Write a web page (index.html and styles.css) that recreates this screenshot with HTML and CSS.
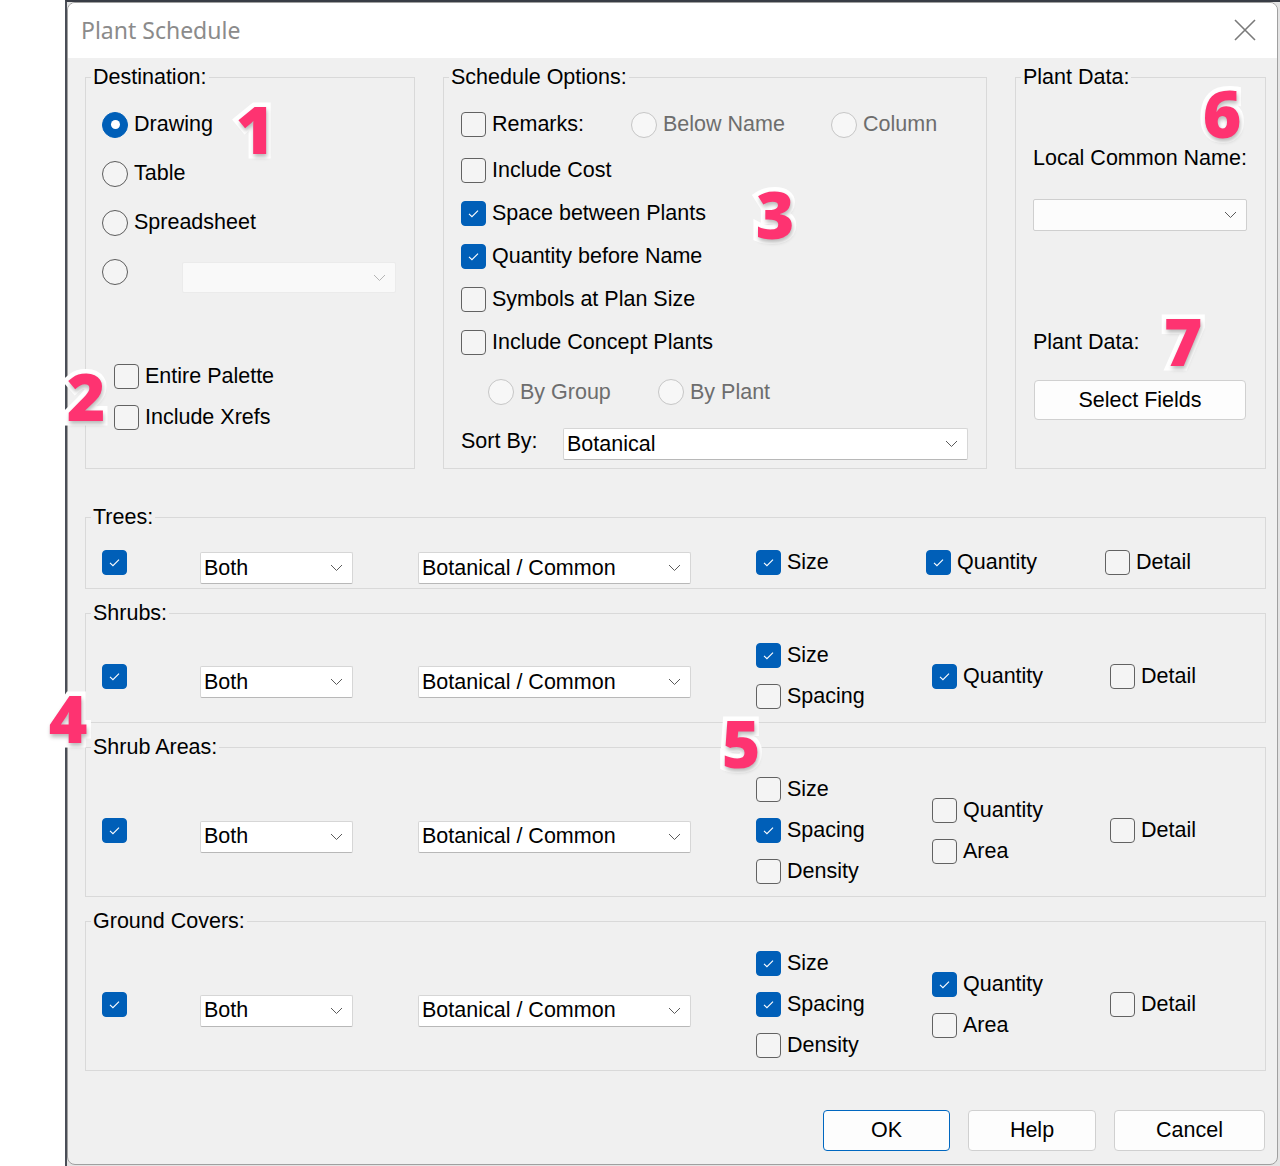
FILE: index.html
```html
<!DOCTYPE html>
<html lang="en">
<head>
<meta charset="utf-8">
<title>Plant Schedule</title>
<link rel="stylesheet" href="styles.css">
</head>
<body>
<div class="screen">
  <div class="backdrop">
    <div class="dialog">
      <div class="titlebar">
        <span class="title">Plant Schedule</span>
        <svg class="close" width="22" height="22" viewBox="0 0 22 22"><path d="M1 1 L21 21 M21 1 L1 21" stroke="#7a7a7a" stroke-width="1.6" fill="none"/></svg>
      </div>
      <div class="body">
        <div class="top-row">
          <fieldset class="group dest">
            <legend>Destination:</legend>
            <div class="dest-inner">
              <div class="radio-list">
                <label class="opt r49"><span class="radio on"></span>Drawing</label>
                <label class="opt r49"><span class="radio"></span>Table</label>
                <label class="opt r49"><span class="radio"></span>Spreadsheet</label>
                <div class="opt r49"><span class="radio"></span>
                  <div class="combo disabled w214"><span></span><svg class="chev" width="13" height="8" viewBox="0 0 13 8"><path d="M1 1 L6.5 6.5 L12 1" fill="none" stroke="#b5b5b5" stroke-width="1"/></svg></div>
                </div>
              </div>
              <div class="dest-checks">
                <label class="opt r41"><span class="chk"></span>Entire Palette</label>
                <label class="opt r41"><span class="chk"></span>Include Xrefs</label>
              </div>
            </div>
          </fieldset>

          <fieldset class="group sched">
            <legend>Schedule Options:</legend>
            <div class="sched-inner">
              <div class="srow first">
                <label class="opt w170"><span class="chk"></span>Remarks:</label>
                <label class="opt w200 dis"><span class="radio dis"></span>Below Name</label>
                <label class="opt dis"><span class="radio dis"></span>Column</label>
              </div>
              <div class="srow"><label class="opt"><span class="chk"></span>Include Cost</label></div>
              <div class="srow"><label class="opt"><span class="chk on"><svg viewBox="0 0 25 25"><path d="M7.6 12.9 L10.8 16 L17.4 9.4" fill="none" stroke="#fff" stroke-width="1.2"/></svg></span>Space between Plants</label></div>
              <div class="srow"><label class="opt"><span class="chk on"><svg viewBox="0 0 25 25"><path d="M7.6 12.9 L10.8 16 L17.4 9.4" fill="none" stroke="#fff" stroke-width="1.2"/></svg></span>Quantity before Name</label></div>
              <div class="srow"><label class="opt"><span class="chk"></span>Symbols at Plan Size</label></div>
              <div class="srow"><label class="opt"><span class="chk"></span>Include Concept Plants</label></div>
              <div class="srow by">
                <label class="opt w170 dis"><span class="radio dis"></span>By Group</label>
                <label class="opt dis"><span class="radio dis"></span>By Plant</label>
              </div>
              <div class="sort-row">
                <span class="sort-label">Sort By:</span>
                <div class="combo w405"><span>Botanical</span><svg class="chev" width="13" height="8" viewBox="0 0 13 8"><path d="M1 1 L6.5 6.5 L12 1" fill="none" stroke="#5a5a5a" stroke-width="1"/></svg></div>
              </div>
            </div>
          </fieldset>

          <fieldset class="group pdata">
            <legend>Plant Data:</legend>
            <div class="pdata-inner">
              <div class="pd-label first">Local Common Name:</div>
              <div class="combo soft w214"><span></span><svg class="chev" width="13" height="8" viewBox="0 0 13 8"><path d="M1 1 L6.5 6.5 L12 1" fill="none" stroke="#5a5a5a" stroke-width="1"/></svg></div>
              <div class="pd-label second">Plant Data:</div>
              <button class="btn select">Select Fields</button>
            </div>
          </fieldset>
        </div>

        <fieldset class="group sect trees">
          <legend>Trees:</legend>
          <div class="sect-grid">
            <span class="chk on"><svg viewBox="0 0 25 25"><path d="M7.6 12.9 L10.8 16 L17.4 9.4" fill="none" stroke="#fff" stroke-width="1.2"/></svg></span>
            <div class="combo w153"><span>Both</span><svg class="chev" width="13" height="8" viewBox="0 0 13 8"><path d="M1 1 L6.5 6.5 L12 1" fill="none" stroke="#5a5a5a" stroke-width="1"/></svg></div>
            <div class="combo w273"><span>Botanical / Common</span><svg class="chev" width="13" height="8" viewBox="0 0 13 8"><path d="M1 1 L6.5 6.5 L12 1" fill="none" stroke="#5a5a5a" stroke-width="1"/></svg></div>
            <div class="stack"><label class="opt r41"><span class="chk on"><svg viewBox="0 0 25 25"><path d="M7.6 12.9 L10.8 16 L17.4 9.4" fill="none" stroke="#fff" stroke-width="1.2"/></svg></span>Size</label></div>
            <div class="stack"><label class="opt r41"><span class="chk on"><svg viewBox="0 0 25 25"><path d="M7.6 12.9 L10.8 16 L17.4 9.4" fill="none" stroke="#fff" stroke-width="1.2"/></svg></span>Quantity</label></div>
            <div class="stack"><label class="opt r41"><span class="chk"></span>Detail</label></div>
          </div>
        </fieldset>

        <fieldset class="group sect shrubs">
          <legend>Shrubs:</legend>
          <div class="sect-grid">
            <span class="chk on"><svg viewBox="0 0 25 25"><path d="M7.6 12.9 L10.8 16 L17.4 9.4" fill="none" stroke="#fff" stroke-width="1.2"/></svg></span>
            <div class="combo w153"><span>Both</span><svg class="chev" width="13" height="8" viewBox="0 0 13 8"><path d="M1 1 L6.5 6.5 L12 1" fill="none" stroke="#5a5a5a" stroke-width="1"/></svg></div>
            <div class="combo w273"><span>Botanical / Common</span><svg class="chev" width="13" height="8" viewBox="0 0 13 8"><path d="M1 1 L6.5 6.5 L12 1" fill="none" stroke="#5a5a5a" stroke-width="1"/></svg></div>
            <div class="stack">
              <label class="opt r41"><span class="chk on"><svg viewBox="0 0 25 25"><path d="M7.6 12.9 L10.8 16 L17.4 9.4" fill="none" stroke="#fff" stroke-width="1.2"/></svg></span>Size</label>
              <label class="opt r41"><span class="chk"></span>Spacing</label>
            </div>
            <div class="stack"><label class="opt r41"><span class="chk on"><svg viewBox="0 0 25 25"><path d="M7.6 12.9 L10.8 16 L17.4 9.4" fill="none" stroke="#fff" stroke-width="1.2"/></svg></span>Quantity</label></div>
            <div class="stack"><label class="opt r41"><span class="chk"></span>Detail</label></div>
          </div>
        </fieldset>

        <fieldset class="group sect">
          <legend>Shrub Areas:</legend>
          <div class="sect-grid">
            <span class="chk on"><svg viewBox="0 0 25 25"><path d="M7.6 12.9 L10.8 16 L17.4 9.4" fill="none" stroke="#fff" stroke-width="1.2"/></svg></span>
            <div class="combo w153"><span>Both</span><svg class="chev" width="13" height="8" viewBox="0 0 13 8"><path d="M1 1 L6.5 6.5 L12 1" fill="none" stroke="#5a5a5a" stroke-width="1"/></svg></div>
            <div class="combo w273"><span>Botanical / Common</span><svg class="chev" width="13" height="8" viewBox="0 0 13 8"><path d="M1 1 L6.5 6.5 L12 1" fill="none" stroke="#5a5a5a" stroke-width="1"/></svg></div>
            <div class="stack">
              <label class="opt r41"><span class="chk"></span>Size</label>
              <label class="opt r41"><span class="chk on"><svg viewBox="0 0 25 25"><path d="M7.6 12.9 L10.8 16 L17.4 9.4" fill="none" stroke="#fff" stroke-width="1.2"/></svg></span>Spacing</label>
              <label class="opt r41"><span class="chk"></span>Density</label>
            </div>
            <div class="stack">
              <label class="opt r41"><span class="chk"></span>Quantity</label>
              <label class="opt r41"><span class="chk"></span>Area</label>
            </div>
            <div class="stack"><label class="opt r41"><span class="chk"></span>Detail</label></div>
          </div>
        </fieldset>

        <fieldset class="group sect">
          <legend>Ground Covers:</legend>
          <div class="sect-grid">
            <span class="chk on"><svg viewBox="0 0 25 25"><path d="M7.6 12.9 L10.8 16 L17.4 9.4" fill="none" stroke="#fff" stroke-width="1.2"/></svg></span>
            <div class="combo w153"><span>Both</span><svg class="chev" width="13" height="8" viewBox="0 0 13 8"><path d="M1 1 L6.5 6.5 L12 1" fill="none" stroke="#5a5a5a" stroke-width="1"/></svg></div>
            <div class="combo w273"><span>Botanical / Common</span><svg class="chev" width="13" height="8" viewBox="0 0 13 8"><path d="M1 1 L6.5 6.5 L12 1" fill="none" stroke="#5a5a5a" stroke-width="1"/></svg></div>
            <div class="stack">
              <label class="opt r41"><span class="chk on"><svg viewBox="0 0 25 25"><path d="M7.6 12.9 L10.8 16 L17.4 9.4" fill="none" stroke="#fff" stroke-width="1.2"/></svg></span>Size</label>
              <label class="opt r41"><span class="chk on"><svg viewBox="0 0 25 25"><path d="M7.6 12.9 L10.8 16 L17.4 9.4" fill="none" stroke="#fff" stroke-width="1.2"/></svg></span>Spacing</label>
              <label class="opt r41"><span class="chk"></span>Density</label>
            </div>
            <div class="stack">
              <label class="opt r41"><span class="chk on"><svg viewBox="0 0 25 25"><path d="M7.6 12.9 L10.8 16 L17.4 9.4" fill="none" stroke="#fff" stroke-width="1.2"/></svg></span>Quantity</label>
              <label class="opt r41"><span class="chk"></span>Area</label>
            </div>
            <div class="stack"><label class="opt r41"><span class="chk"></span>Detail</label></div>
          </div>
        </fieldset>

        <div class="buttons">
          <button class="btn ok">OK</button>
          <button class="btn help">Help</button>
          <button class="btn cancel">Cancel</button>
        </div>
      </div>
    </div>
  </div>

  <span class="badge b1">1</span>
  <span class="badge b2">2</span>
  <span class="badge b3">3</span>
  <span class="badge b4">4</span>
  <span class="badge b5">5</span>
  <span class="badge b6">6</span>
  <span class="badge b7">7</span>
</div>
</body>
</html>
```

FILE: styles.css
```css
* { box-sizing: border-box; }

html, body {
  margin: 0;
  padding: 0;
  background: #ffffff;
}

body {
  font-family: "Liberation Sans", Arial, sans-serif;
  font-size: 21.5px;
  color: #000;
}

.screen {
  position: relative;
  width: 1280px;
  height: 1166px;
  padding-left: 65px;
  display: flex;
  overflow: hidden;
}

.backdrop {
  flex: 1;
  background: #e4e4e4;
  border-top: 2px solid #383c45;
  border-left: 2px solid #4a4e57;
}

.dialog {
  width: 1211px;
  height: 1163px;
  background: #f0f0f0;
  border: 1px solid #a0a0a0;
  border-radius: 8px;
  overflow: hidden;
  display: flex;
  flex-direction: column;
}

.titlebar {
  height: 55px;
  background: #ffffff;
  display: flex;
  align-items: center;
  justify-content: space-between;
  padding: 0 21px 0 13px;
  flex: none;
}

.title {
  font-family: "Noto Sans", "Open Sans", sans-serif;
  font-size: 23px;
  color: #8b8b8b;
  margin-top: -1px;
}

.close { display: block; margin-top: -2px; }

.body {
  padding: 7px 0 0 17px;
}

/* group boxes */
.group {
  margin: 0;
  padding: 0;
  min-width: 0;
  border: 1px solid #d9d9d9;
}

.group legend {
  margin-left: 5px;
  padding: 0 2px;
  line-height: 24px;
  font-size: 21.5px;
}

.top-row {
  display: flex;
  gap: 28px;
  height: 404px;
}

.dest { width: 330px; }
.sched { width: 544px; }
.pdata { width: 251px; }

.dest-inner { padding: 11px 0 0 16px; }
.sched-inner { padding: 0 0 0 17px; }
.pdata-inner { padding: 0 0 0 17px; }

/* generic option rows */
.opt {
  display: flex;
  align-items: center;
  gap: 6px;
  white-space: nowrap;
}

.r49 { height: 49px; }
.r41 { height: 41px; }
.w170 { width: 170px; flex: none; }
.w200 { width: 200px; flex: none; }

.dis { color: #6d6d6d; }

.radio {
  width: 26px;
  height: 26px;
  border-radius: 50%;
  border: 1px solid #5c5c5c;
  background: #f4f4f4;
  flex: none;
  display: flex;
  align-items: center;
  justify-content: center;
}

.radio.on {
  background: #005fb8;
  border-color: #005fb8;
}

.radio.on::after {
  content: "";
  width: 9px;
  height: 9px;
  border-radius: 50%;
  background: #ffffff;
}

.radio.dis {
  border-color: #c6c6c6;
  background: #f7f7f7;
}

.chk {
  width: 25px;
  height: 25px;
  border: 1px solid #626262;
  border-radius: 4px;
  background: #f4f4f4;
  flex: none;
  display: block;
}

.chk svg { display: block; width: 100%; height: 100%; }

.chk.on {
  background: #005fb8;
  border-color: #005fb8;
}

.dest-checks {
  margin-top: 60px;
  padding-left: 12px;
}

/* combo boxes */
.combo {
  height: 32px;
  display: flex;
  align-items: center;
  justify-content: space-between;
  padding: 0 9px 0 3px;
  background: #ffffff;
  border: 1px solid #d6d6d6;
  border-bottom-color: #b8b8b8;
  border-radius: 2px;
  flex: none;
  white-space: nowrap;
}

.combo .chev { flex: none; }

.combo.disabled {
  background: #f9f9f9;
  border-color: #ebebeb;
  height: 31px;
  margin-left: 48px;
  margin-top: 12px;
}

.combo.soft {
  background: #fcfcfc;
  border-color: #cfcfcf;
}

.w214 { width: 214px; }
.w405 { width: 405px; }
.w153 { width: 153px; margin-top: 12px; }
.w273 { width: 273px; margin-top: 12px; }

/* schedule options */
.srow { display: flex; align-items: center; height: 43px; }
.srow.first { height: 49px; margin-top: 11px; }
.srow.by { height: 42px; margin-top: 7px; padding-left: 27px; }

.sort-row {
  display: flex;
  align-items: flex-start;
  margin-top: 15px;
}

.sort-label {
  width: 102px;
  line-height: 26px;
  flex: none;
}

/* plant data */
.pd-label { line-height: 24px; }
.pd-label.first { margin-top: 57px; margin-bottom: 29px; }
.pd-label.second { margin-top: 99px; margin-bottom: 26px; }

.btn {
  font-family: "Liberation Sans", Arial, sans-serif;
  font-size: 21.5px;
  color: #000;
  background: #fdfdfd;
  border: 1px solid #d0d0d0;
  border-radius: 4px;
  padding: 0;
}

.btn.select {
  width: 212px;
  height: 40px;
  margin-left: 1px;
}

/* lower sections */
.sect { width: 1181px; margin-top: 12px; }
.trees { margin-top: 36px; }

.sect-grid {
  display: grid;
  grid-template-columns: 98px 218px 338px 176px 178px 1fr;
  align-items: center;
  padding: 10px 0 4px 16px;
}

.trees .sect-grid {
  grid-template-columns: 98px 218px 338px 170px 179px 1fr;
  padding-top: 11px;
  padding-bottom: 4px;
}

.shrubs .sect-grid { padding-bottom: 5px; }

.stack { display: flex; flex-direction: column; }

/* buttons */
.buttons {
  display: flex;
  justify-content: flex-end;
  gap: 18px;
  margin-top: 39px;
  width: 1180px;
}

.btn.ok { width: 127px; height: 41px; border-color: #0067c0; }
.btn.help { width: 128px; height: 41px; }
.btn.cancel { width: 151px; height: 41px; }

/* annotation badges */
.badge {
  position: absolute;
  transform: translate(-50%, -50%);
  font-family: "Open Sans", "Noto Sans", sans-serif;
  font-weight: 800;
  font-size: 66px;
  line-height: 1;
  color: #fe3371;
  -webkit-text-stroke: 9px #ffffff;
  paint-order: stroke fill;
  text-shadow: 1px 3px 4px rgba(0, 0, 0, 0.28);
}

.b1 { left: 255px; top: 128px; }
.b2 { left: 86px; top: 395px; }
.b3 { left: 775px; top: 213px; }
.b4 { left: 68px; top: 717px; }
.b5 { left: 741px; top: 742px; }
.b6 { left: 1222px; top: 112px; }
.b7 { left: 1183px; top: 340px; }
```
